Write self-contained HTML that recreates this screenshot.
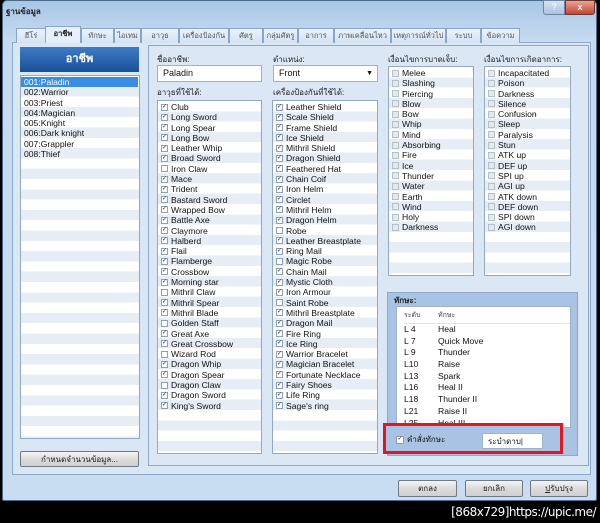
<!DOCTYPE html>
<html><head><meta charset="utf-8"><style>
*{box-sizing:border-box;margin:0;padding:0}
html{width:600px;height:523px;overflow:hidden}
body{width:600px;height:523px;background:#000;position:relative;overflow:hidden;font-family:"Liberation Sans","DejaVu Sans",sans-serif;font-size:9px;color:#111}
.a{position:absolute}
.win{left:2px;top:0;width:595px;height:501px;background:linear-gradient(#a9c6e6,#c6dbf1 40px,#c9ddf2);border:1px solid #4a6a8c;border-radius:5px 5px 2px 2px}
.tab{position:absolute;top:28px;height:15px;border:1px solid #8aa6c6;border-bottom:none;background:linear-gradient(#eaf2fb,#d3e2f3);font-size:7.5px;color:#555;text-align:center;line-height:13px;white-space:nowrap;overflow:hidden}
.panel{background:#dbe7f5;border:1px solid #8ea9c7}
.list{position:absolute;background:repeating-linear-gradient(#fff 0 10.3px,#e7edf4 10.3px 20.6px);border:1px solid #93a9c2;overflow:hidden}
.list div{height:10.3px;line-height:10.3px;white-space:nowrap;padding-left:3px;font-size:8.6px;overflow:hidden;position:relative}
.list.c div{padding-left:13px}
.cb{position:absolute;left:3px;top:1.5px;width:7px;height:7px;border:1px solid #8ea1b6;background:#fff;font-size:6px;line-height:5px;text-align:center;color:#223;font-style:normal}
.u .cb{background:#e4e9ef;border-color:#b5c0cc}
.lbl{position:absolute;font-size:8px;color:#222;white-space:nowrap;line-height:10px}
.btn{position:absolute;height:17px;border:1px solid #707a86;border-radius:2px;background:linear-gradient(#f4f4f4,#dcdcdc 50%,#cfcfcf);font-size:8px;text-align:center;line-height:15px;color:#222;white-space:nowrap}
.inp{position:absolute;background:#fff;border:1px solid #a0b2c6;font-size:9px;padding-left:5px;line-height:15px;white-space:nowrap}
.sk div{height:11.7px;line-height:11.7px;font-size:8.6px;position:relative;white-space:nowrap}
.sk span{position:absolute;left:34px}
</style></head><body>
<div class="a win"></div>
<div class="a" style="left:6px;top:7px;font-size:8px;font-weight:bold;color:#222;line-height:10px">ฐานข้อมูล</div>
<div class="a" style="left:543px;top:0;width:22px;height:15px;background:linear-gradient(#d6e4f3,#a9c2de);border:1px solid #6d86a3;border-radius:0 0 0 3px;color:#fff;text-align:center;font-size:9px;line-height:13px">?</div>
<div class="a" style="left:565px;top:0;width:30px;height:15px;background:linear-gradient(#e8a396,#c8432e);border:1px solid #6d3a33;border-radius:0 0 3px 0;color:#fff;text-align:center;font-weight:bold;font-size:9px;line-height:13px">x</div>

<div class="a panel" style="left:12px;top:42px;width:579px;height:433px;background:#d9e6f4"></div>
<div class="tab" style="left:16px;width:30px">ฮีโร่</div>
<div class="tab" style="left:45px;top:26px;height:17px;width:36px;background:#e7f0fa;color:#222;font-weight:bold">อาชีพ</div>
<div class="tab" style="left:81px;width:33px">ทักษะ</div>
<div class="tab" style="left:114px;width:27px">ไอเทม</div>
<div class="tab" style="left:141px;width:38px">อาวุธ</div>
<div class="tab" style="left:179px;width:50px">เครื่องป้องกัน</div>
<div class="tab" style="left:229px;width:34px">ศัตรู</div>
<div class="tab" style="left:263px;width:35px">กลุ่มศัตรู</div>
<div class="tab" style="left:298px;width:36px">อาการ</div>
<div class="tab" style="left:334px;width:57px">ภาพเคลื่อนไหว</div>
<div class="tab" style="left:391px;width:55px">เหตุการณ์ทั่วไป</div>
<div class="tab" style="left:446px;width:35px">ระบบ</div>
<div class="tab" style="left:481px;width:39px">ข้อความ</div>

<div class="a" style="left:20px;top:47px;width:119px;height:25px;background:linear-gradient(#3d7cc6,#1a4f98);color:#fff;font-weight:bold;font-size:11px;text-align:center;line-height:25px">อาชีพ</div>
<div class="list" style="left:20px;top:75px;width:120px;height:364px;padding-top:1px">
<div style="background:#3a8de4;color:#fff;margin-right:1px">001:Paladin</div><div>002:Warrior</div><div>003:Priest</div><div>004:Magician</div><div>005:Knight</div><div>006:Dark knight</div><div>007:Grappler</div><div>008:Thief</div></div>
<div class="btn" style="left:20px;top:451px;width:119px;height:16px">กำหนดจำนวนข้อมูล...</div>

<div class="a panel" style="left:148px;top:45px;width:441px;height:421px"></div>
<div class="lbl" style="left:157px;top:55px">ชื่ออาชีพ:</div>
<div class="inp" style="left:157px;top:65px;width:105px;height:17px">Paladin</div>
<div class="lbl" style="left:273px;top:55px">ตำแหน่ง:</div>
<div class="inp" style="left:273px;top:65px;width:105px;height:17px">Front<span style="position:absolute;right:4px;top:0;font-size:7px">▼</span></div>
<div class="lbl" style="left:157px;top:88px">อาวุธที่ใช้ได้:</div>
<div class="lbl" style="left:273px;top:88px">เครื่องป้องกันที่ใช้ได้:</div>

<div class="list c" style="left:157px;top:100px;width:105px;height:354px;padding-top:1px">
<div><i class="cb">✓</i>Club</div><div><i class="cb">✓</i>Long Sword</div><div><i class="cb">✓</i>Long Spear</div><div><i class="cb">✓</i>Long Bow</div><div><i class="cb">✓</i>Leather Whip</div><div><i class="cb">✓</i>Broad Sword</div><div><i class="cb"></i>Iron Claw</div><div><i class="cb">✓</i>Mace</div><div><i class="cb">✓</i>Trident</div><div><i class="cb">✓</i>Bastard Sword</div><div><i class="cb">✓</i>Wrapped Bow</div><div><i class="cb">✓</i>Battle Axe</div><div><i class="cb">✓</i>Claymore</div><div><i class="cb">✓</i>Halberd</div><div><i class="cb">✓</i>Flail</div><div><i class="cb">✓</i>Flamberge</div><div><i class="cb">✓</i>Crossbow</div><div><i class="cb">✓</i>Morning star</div><div><i class="cb"></i>Mithril Claw</div><div><i class="cb">✓</i>Mithril Spear</div><div><i class="cb">✓</i>Mithril Blade</div><div><i class="cb"></i>Golden Staff</div><div><i class="cb">✓</i>Great Axe</div><div><i class="cb">✓</i>Great Crossbow</div><div><i class="cb"></i>Wizard Rod</div><div><i class="cb">✓</i>Dragon Whip</div><div><i class="cb">✓</i>Dragon Spear</div><div><i class="cb"></i>Dragon Claw</div><div><i class="cb">✓</i>Dragon Sword</div><div><i class="cb">✓</i>King's Sword</div></div>

<div class="list c" style="left:272px;top:100px;width:106px;height:354px;padding-top:1px">
<div><i class="cb">✓</i>Leather Shield</div><div><i class="cb">✓</i>Scale Shield</div><div><i class="cb">✓</i>Frame Shield</div><div><i class="cb">✓</i>Ice Shield</div><div><i class="cb">✓</i>Mithril Shield</div><div><i class="cb">✓</i>Dragon Shield</div><div><i class="cb">✓</i>Feathered Hat</div><div><i class="cb">✓</i>Chain Coif</div><div><i class="cb">✓</i>Iron Helm</div><div><i class="cb">✓</i>Circlet</div><div><i class="cb">✓</i>Mithril Helm</div><div><i class="cb">✓</i>Dragon Helm</div><div><i class="cb"></i>Robe</div><div><i class="cb">✓</i>Leather Breastplate</div><div><i class="cb">✓</i>Ring Mail</div><div><i class="cb"></i>Magic Robe</div><div><i class="cb">✓</i>Chain Mail</div><div><i class="cb">✓</i>Mystic Cloth</div><div><i class="cb">✓</i>Iron Armour</div><div><i class="cb"></i>Saint Robe</div><div><i class="cb">✓</i>Mithril Breastplate</div><div><i class="cb">✓</i>Dragon Mail</div><div><i class="cb">✓</i>Fire Ring</div><div><i class="cb">✓</i>Ice Ring</div><div><i class="cb">✓</i>Warrior Bracelet</div><div><i class="cb">✓</i>Magician Bracelet</div><div><i class="cb">✓</i>Fortunate Necklace</div><div><i class="cb">✓</i>Fairy Shoes</div><div><i class="cb">✓</i>Life Ring</div><div><i class="cb">✓</i>Sage's ring</div></div>

<div class="lbl" style="left:388px;top:55px">เงื่อนไขการบาดเจ็บ:</div>
<div class="lbl" style="left:484px;top:55px">เงื่อนไขการเกิดอาการ:</div>
<div class="list c u" style="left:388px;top:66px;width:86px;height:210px;padding-top:1px">
<div><i class="cb"></i>Melee</div><div><i class="cb"></i>Slashing</div><div><i class="cb"></i>Piercing</div><div><i class="cb"></i>Blow</div><div><i class="cb"></i>Bow</div><div><i class="cb"></i>Whip</div><div><i class="cb"></i>Mind</div><div><i class="cb"></i>Absorbing</div><div><i class="cb"></i>Fire</div><div><i class="cb"></i>Ice</div><div><i class="cb"></i>Thunder</div><div><i class="cb"></i>Water</div><div><i class="cb"></i>Earth</div><div><i class="cb"></i>Wind</div><div><i class="cb"></i>Holy</div><div><i class="cb"></i>Darkness</div></div>
<div class="list c u" style="left:484px;top:66px;width:87px;height:210px;padding-top:1px">
<div><i class="cb"></i>Incapacitated</div><div><i class="cb"></i>Poison</div><div><i class="cb"></i>Darkness</div><div><i class="cb"></i>Silence</div><div><i class="cb"></i>Confusion</div><div><i class="cb"></i>Sleep</div><div><i class="cb"></i>Paralysis</div><div><i class="cb"></i>Stun</div><div><i class="cb"></i>ATK up</div><div><i class="cb"></i>DEF up</div><div><i class="cb"></i>SPI up</div><div><i class="cb"></i>AGI up</div><div><i class="cb"></i>ATK down</div><div><i class="cb"></i>DEF down</div><div><i class="cb"></i>SPI down</div><div><i class="cb"></i>AGI down</div></div>

<div class="a" style="left:387px;top:292px;width:191px;height:164px;background:#a8c3e3;border:1px solid #8ea9c7"></div>
<div class="lbl" style="left:394px;top:296px;font-weight:bold">ทักษะ:</div>
<div class="a sk" style="left:396px;top:306px;width:175px;height:122px;background:#fff;border:1px solid #9fb2c8;overflow:hidden;padding-left:7px">
<div style="height:17px;line-height:17px;font-size:7px;color:#444;border-bottom:1px solid #e0e6ee">ระดับ<span style="font-size:7px">ทักษะ</span></div>
<div>L 4<span>Heal</span></div><div>L 7<span>Quick Move</span></div><div>L 9<span>Thunder</span></div><div>L10<span>Raise</span></div><div>L13<span>Spark</span></div><div>L16<span>Heal II</span></div><div>L18<span>Thunder II</span></div><div>L21<span>Raise II</span></div><div>L25<span>Heal III</span></div>
<div class="a" style="left:157px;top:0;width:17px;height:121px;background:#f0f0f0;border-left:1px solid #ddd"></div>
<div class="a" style="left:160px;top:20px;width:11px;height:70px;background:linear-gradient(90deg,#e8e8e8,#d4d4d4);border:1px solid #a0a0a0;border-radius:2px"></div>
</div>
<div class="a" style="left:383px;top:423px;width:180px;height:31px;border:3px solid #e3161f;background:#a8c3e3"></div>
<div class="a" style="left:396px;top:435px;font-size:8px;white-space:nowrap;padding-left:11px;line-height:10px"><i class="cb" style="left:0;top:1px;width:8px;height:8px">✓</i>คำสั่งทักษะ</div>
<div class="inp" style="left:482px;top:433px;width:61px;height:16px;font-size:8px">ระบำดาบ|</div>

<div class="btn" style="left:398px;top:480px;width:59px">ตกลง</div>
<div class="btn" style="left:465px;top:480px;width:58px">ยกเลิก</div>
<div class="btn" style="left:530px;top:480px;width:58px"><u>ป</u>รับปรุง</div>

<div class="a" style="right:4px;top:505px;color:#fff;font-size:12px;line-height:15px;font-family:'DejaVu Sans',sans-serif;letter-spacing:-0.5px;white-space:nowrap">[868x729]https://upic.me/</div>
</body></html>
